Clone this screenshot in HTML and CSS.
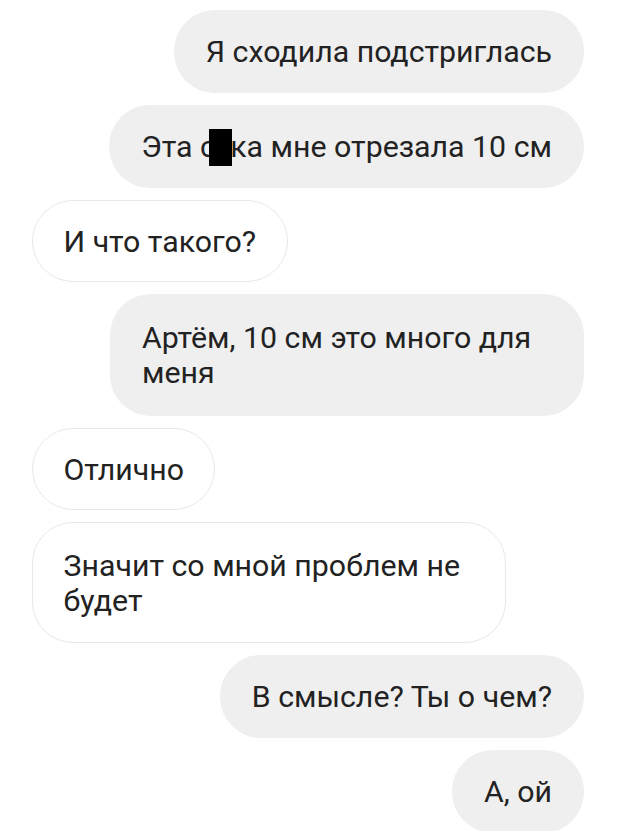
FILE: index.html
```html
<!DOCTYPE html>
<html>
<head>
  <title>Переписка</title>
  <link rel="stylesheet" href="styles.css">
</head>
<body>
  <main class="chat">
    <div class="msg sent">Я сходила подстриглась</div>
    <div class="msg sent oneline">Эта с<span class="censor">у</span>ка мне отрезала 10 см</div>
    <div class="msg received">И что такого?</div>
    <div class="msg sent long">Артём, 10 см это много для меня</div>
    <div class="msg received">Отлично</div>
    <div class="msg received long">Значит со мной проблем не будет</div>
    <div class="msg sent">В смысле? Ты о чем?</div>
    <div class="msg sent">А, ой</div>
  </main>
</body>
</html>
```

FILE: styles.css
```css
body {
  margin: 0;
  padding: 0;
  background-color: #fff;
  font-family: Roboto, 'Noto Sans', Arial, sans-serif;
  color: #222;
  overflow: hidden;
}

.chat {
  display: flex;
  flex-direction: column;
  gap: 12px;
  padding: 10px 46px 0 32px;
}

.msg {
  max-width: 474px;
  box-sizing: border-box;
  padding: 24px 32px;
  font-size: 30.3px;
  line-height: 35px;
  border-radius: 41px;
}

.sent {
  align-self: flex-end;
  background-color: #efefef;
}

.received {
  align-self: flex-start;
  background-color: #fff;
  border: 1.5px solid #e8e8e8;
  padding: 22.5px 30.5px;
}

.oneline {
  max-width: none;
  white-space: nowrap;
}

/* two-line messages get a bit more air */
.sent.long {
  padding-top: 26px;
  padding-bottom: 26px;
}

.received.long {
  padding-top: 24.5px;
  padding-bottom: 24.5px;
}

/* black bar over the rude word */
.censor {
  position: relative;
  color: #000;
}

.censor::after {
  content: "";
  position: absolute;
  left: -7px;
  right: -2px;
  top: 0;
  height: 37px;
  background-color: #000;
}
```
